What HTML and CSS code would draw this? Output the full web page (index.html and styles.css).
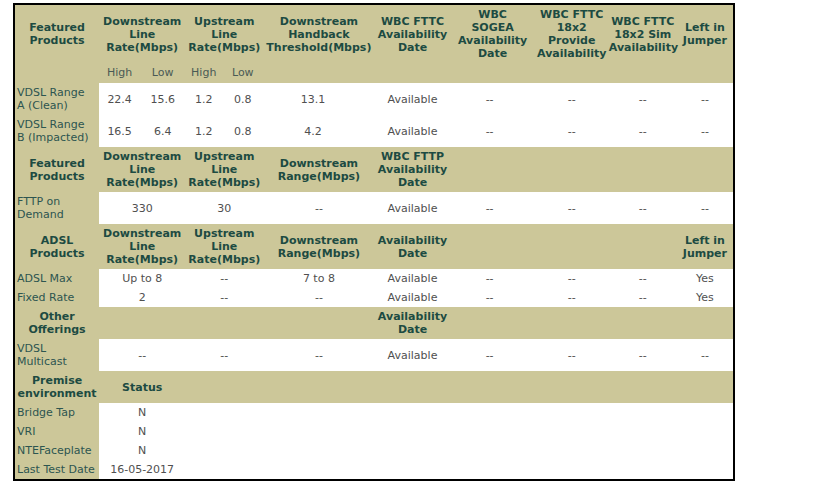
FILE: index.html
```html
<!DOCTYPE html>
<html>
<head>
<meta charset="utf-8">
<link rel="stylesheet" href="styles.css">
</head>
<body>
<div class="panel">
<table class="grid">
<colgroup>
<col class="w-label"><col class="w-41"><col class="w-45"><col class="w-37"><col class="w-41"><col class="w-111"><col class="w-76"><col class="w-84"><col class="w-74"><col class="w-68"><col class="w-57">
</colgroup>
<tr class="hd">
<th>Featured<br>Products</th>
<th colspan="2">Downstream<br>Line<br>Rate(Mbps)</th>
<th colspan="2">Upstream<br>Line<br>Rate(Mbps)</th>
<th>Downstream<br>Handback<br>Threshold(Mbps)</th>
<th>WBC FTTC<br>Availability<br>Date</th>
<th>WBC<br>SOGEA<br>Availability<br>Date</th>
<th>WBC FTTC<br>18x2<br>Provide<br>Availability</th>
<th>WBC FTTC<br>18x2 Sim<br>Availability</th>
<th>Left in<br>Jumper</th>
</tr>
<tr class="sub">
<td></td><td>High</td><td>Low</td><td>High</td><td>Low</td><td></td><td></td><td></td><td></td><td></td><td></td>
</tr>
<tr class="row">
<td class="lbl">VDSL Range<br>A (Clean)</td><td>22.4</td><td>15.6</td><td>1.2</td><td>0.8</td><td class="sh8">13.1</td><td>Available</td><td class="sh4">--</td><td>--</td><td>--</td><td>--</td>
</tr>
<tr class="row">
<td class="lbl">VDSL Range<br>B (Impacted)</td><td>16.5</td><td>6.4</td><td>1.2</td><td>0.8</td><td class="sh8">4.2</td><td>Available</td><td class="sh4">--</td><td>--</td><td>--</td><td>--</td>
</tr>
<tr class="hd">
<th>Featured<br>Products</th>
<th colspan="2">Downstream<br>Line<br>Rate(Mbps)</th>
<th colspan="2">Upstream<br>Line<br>Rate(Mbps)</th>
<th>Downstream<br>Range(Mbps)</th>
<th>WBC FTTP<br>Availability<br>Date</th>
<th></th><th></th><th></th><th></th>
</tr>
<tr class="row">
<td class="lbl">FTTP on<br>Demand</td><td colspan="2">330</td><td colspan="2">30</td><td>--</td><td>Available</td><td class="sh4">--</td><td>--</td><td>--</td><td>--</td>
</tr>
<tr class="hd">
<th>ADSL<br>Products</th>
<th colspan="2">Downstream<br>Line<br>Rate(Mbps)</th>
<th colspan="2">Upstream<br>Line<br>Rate(Mbps)</th>
<th>Downstream<br>Range(Mbps)</th>
<th>Availability<br>Date</th>
<th></th><th></th><th></th>
<th>Left in<br>Jumper</th>
</tr>
<tr class="row">
<td class="lbl">ADSL Max</td><td colspan="2">Up to 8</td><td colspan="2">--</td><td>7 to 8</td><td>Available</td><td class="sh4">--</td><td>--</td><td>--</td><td>Yes</td>
</tr>
<tr class="row">
<td class="lbl">Fixed Rate</td><td colspan="2">2</td><td colspan="2">--</td><td>--</td><td>Available</td><td class="sh4">--</td><td>--</td><td>--</td><td>Yes</td>
</tr>
<tr class="hd">
<th>Other<br>Offerings</th>
<th colspan="2"></th><th colspan="2"></th><th></th>
<th>Availability<br>Date</th>
<th></th><th></th><th></th><th></th>
</tr>
<tr class="row">
<td class="lbl">VDSL<br>Multicast</td><td colspan="2">--</td><td colspan="2">--</td><td>--</td><td>Available</td><td class="sh4">--</td><td>--</td><td>--</td><td>--</td>
</tr>
<tr class="hd">
<th>Premise<br>environment</th>
<th colspan="2">Status</th><th colspan="2"></th><th></th><th></th><th></th><th></th><th></th><th></th>
</tr>
<tr class="row">
<td class="lbl">Bridge Tap</td><td colspan="2">N</td><td colspan="8"></td>
</tr>
<tr class="row">
<td class="lbl">VRI</td><td colspan="2">N</td><td colspan="8"></td>
</tr>
<tr class="row">
<td class="lbl">NTEFaceplate</td><td colspan="2">N</td><td colspan="8"></td>
</tr>
<tr class="row">
<td class="lbl">Last Test Date</td><td colspan="2">16-05-2017</td><td colspan="8"></td>
</tr>
</table>
</div>
</body>
</html>
```
FILE: styles.css
```css
html, body {
  margin: 0;
  padding: 0;
  background: #ffffff;
}
body {
  font-family: "DejaVu Sans", Verdana, sans-serif;
  font-size: 11px;
  line-height: 13px;
}
.panel {
  margin: 3px 0 0 13px;
  width: 718px;
  border: 2px solid #000;
}
.grid {
  border-collapse: collapse;
  border-spacing: 0;
  table-layout: fixed;
  width: 718px;
}
.w-label { width: 84px; }
.w-41 { width: 41px; }
.w-45 { width: 45px; }
.w-37 { width: 37px; }
.w-111 { width: 111px; }
.w-76 { width: 76px; }
.w-84 { width: 84px; }
.w-74 { width: 74px; }
.w-68 { width: 68px; }
.w-57 { width: 56px; }
.grid th, .grid td {
  padding: 3px 0;
  text-align: center;
  vertical-align: middle;
  white-space: nowrap;
}
.hd th {
  background: #ccc799;
  color: #1d4b42;
  font-weight: bold;
}
.sub td {
  background: #ccc799;
  color: #4a5a55;
  padding: 3px 0 4px;
}
.row td {
  background: #ffffff;
  color: #505050;
}
.row td.lbl {
  background: #ccc799;
  color: #2d5550;
  text-align: left;
  padding-left: 2px;
}
.row td.sh8 { padding-right: 12px; }
.row td.sh4 { padding-right: 6px; }
```
